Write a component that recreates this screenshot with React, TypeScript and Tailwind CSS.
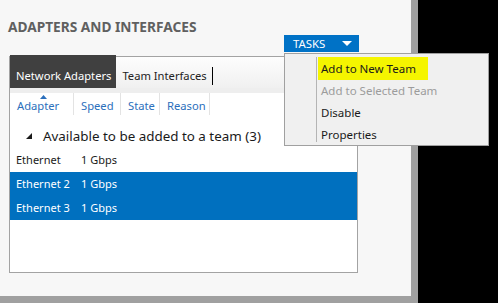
import React from "react";

const font = { fontFamily: '"Segoe UI", "Noto Sans", "Open Sans", sans-serif' };

type Row = { name: string; speed: string; selected: boolean };

const rows: Row[] = [
  { name: "Ethernet", speed: "1 Gbps", selected: false },
  { name: "Ethernet 2", speed: "1 Gbps", selected: true },
  { name: "Ethernet 3", speed: "1 Gbps", selected: true },
];

const columns = [
  { label: "Adapter", w: "w-[64px]" },
  { label: "Speed", w: "w-[47px]" },
  { label: "State", w: "w-[39px]" },
  { label: "Reason", w: "w-[50px]" },
];

export default function App() {
  return (
    <div className="flex w-[498px] h-[303px] bg-black overflow-hidden" style={font}>
      <div className="w-[418px] h-[303px] bg-[#a0a0a0]">
        <div className="relative w-[411px] h-[296px] bg-[#f7f7f7] flex flex-col">
          <h1 className="pt-[18px] pl-[8px] h-[35px] text-[13.7px] leading-[17px] font-bold text-[#606060]">
            ADAPTERS AND INTERFACES
          </h1>

          <div className="flex justify-end pr-[52px]">
            <button className="flex items-center justify-between w-[75px] h-[17px] bg-[#0072c6] pl-[9px] pr-[7px] text-white text-[11.4px] leading-none">
              <span>TASKS</span>
              <svg width="10" height="5" viewBox="0 0 10 5">
                <path d="M0 0h10L5 5z" fill="#fff" />
              </svg>
            </button>
          </div>

          {/* panel */}
          <div className="ml-[9px] mt-[4px] w-[349px] h-[217px] border border-[#a3a3a3] bg-white flex flex-col">
            <div className="flex h-[31px] bg-gradient-to-b from-[#fdfdfd] to-[#f0f0f0] text-[11.2px]">
              <div className="flex items-center -mt-[2px] pt-[9px] h-[33px] pl-[6px] pr-[5px] bg-[#404040] text-white">
                Network Adapters
              </div>
              <div className="flex items-center pt-[7px] pl-[6px] text-[#222]">
                <span>Team Interfaces</span>
                <span className="ml-[5px] w-px h-[18px] bg-black" />
              </div>
            </div>
            <div className="h-[5px] bg-[#eeeeee]" />

            <div className="flex h-[22px] text-[11.2px] text-[#2b6fbc]">
              {columns.map((c, i) => (
                <div
                  key={c.label}
                  className={`relative flex items-center pt-[5px] pl-[7px] ${c.w} border-r border-[#e3e3e3]`}
                >
                  {i === 0 && (
                    <svg className="absolute left-[30px] top-[2px]" width="7" height="4" viewBox="0 0 7 4">
                      <path d="M3.5 0L7 4H0z" fill="#2b6fbc" />
                    </svg>
                  )}
                  {c.label}
                </div>
              ))}
            </div>

            <div className="flex items-center h-[33px] pt-[9px] pl-[16px] text-[13.4px] text-[#1a1a1a]">
              <svg width="6" height="6" viewBox="0 0 6 6">
                <path d="M6 0V6H0z" fill="#1a1a1a" />
              </svg>
              <span className="ml-[11px]">Available to be added to a team (3)</span>
            </div>

            {rows.map((r) => (
              <div
                key={r.name}
                className={`flex items-center h-[24px] pt-[1px] text-[11px] ${
                  r.selected ? "bg-[#0070bf] text-white" : "text-[#1a1a1a]"
                }`}
              >
                <span className="w-[71px] pl-[6px]">{r.name}</span>
                <span>{r.speed}</span>
              </div>
            ))}
          </div>

          {/* tasks menu */}
          <div className="absolute left-[284px] top-[53px] w-[205px] h-[93px] bg-[#f0f0f0] border border-[#a0a0a0] flex text-[11.5px]">
            <div className="w-[32px] my-[3px] border-r border-[#b4b4b4]" />
            <div className="flex flex-col pt-[3px] pl-[1px]">
              <div className="h-[22px] flex items-center">
                <span className="h-[23px] flex items-center w-[110px] px-[3px] pt-[1px] bg-[#f5f500] text-[#1a1a1a]">
                  Add to New Team
                </span>
              </div>
              <div className="h-[22px] flex items-center px-[3px] pt-[1px] text-[#9c9c9c]">Add to Selected Team</div>
              <div className="h-[22px] flex items-center px-[3px] pt-[1px] text-[#1a1a1a]">Disable</div>
              <div className="h-[22px] flex items-center px-[3px] pt-[1px] text-[#1a1a1a]">Properties</div>
            </div>
          </div>
        </div>
      </div>
    </div>
  );
}
